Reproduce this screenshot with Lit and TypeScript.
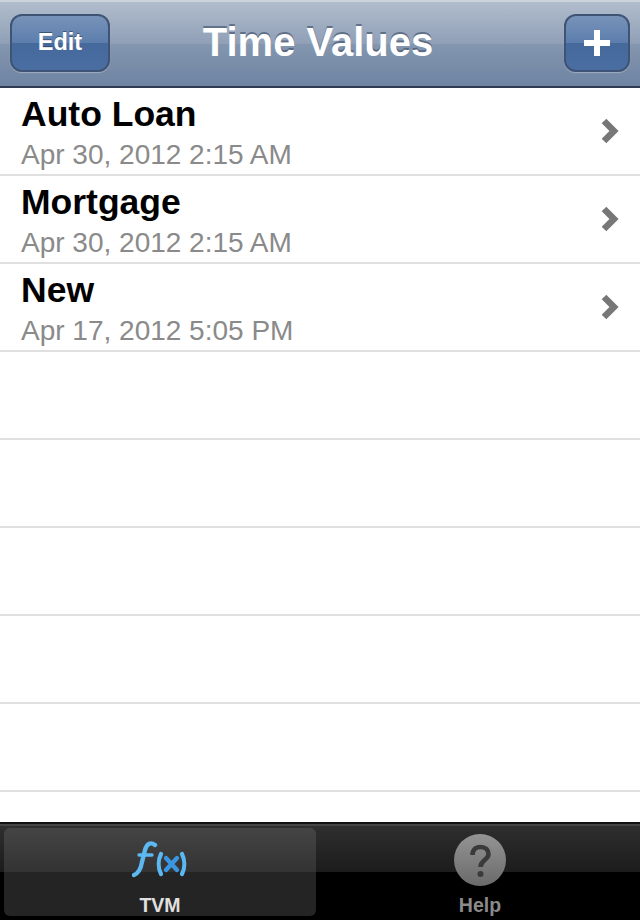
import { LitElement, css, html, svg } from "lit";
import { customElement } from "lit/decorators.js";

const ROWS = [
  { title: "Auto Loan", date: "Apr 30, 2012 2:15 AM" },
  { title: "Mortgage", date: "Apr 30, 2012 2:15 AM" },
  { title: "New", date: "Apr 17, 2012 5:05 PM" },
  null,
  null,
  null,
  null,
  null,
];

const chevron = svg`<path d="M4 4 L14 14 L4 24" fill="none" stroke="#777" stroke-width="6.5" stroke-linecap="butt" stroke-linejoin="miter" />`;

@customElement("app-root")
export class AppRoot extends LitElement {
  static styles = css`
    :host {
      display: flex;
      flex-direction: column;
      width: 640px;
      height: 920px;
      overflow: hidden;
      background: #fff;
      font-family: "Liberation Sans", Arial, sans-serif;
    }

    .nav {
      flex: none;
      box-sizing: border-box;
      height: 88px;
      display: grid;
      grid-template-columns: 1fr auto 1fr;
      align-items: center;
      padding: 0 10px 2px;
      border-top: 2px solid #ccd3dd;
      border-bottom: 2px solid #2d3a50;
      background: linear-gradient(#b1bdcd 0%, #8f9fb6 50%, #8496af 50%, #6e84a3 100%);
    }

    .nav-title {
      color: #fff;
      font-size: 40px;
      font-weight: bold;
      margin-bottom: 2px;
      transform: translateX(-2px);
      text-shadow: 0 -2px 0 rgba(60, 75, 100, 0.6);
    }

    .btn {
      box-sizing: border-box;
      height: 58px;
      margin-top: -1px;
      display: flex;
      align-items: center;
      justify-content: center;
      border: 2px solid #3f5474;
      border-radius: 12px;
      color: #fff;
      font-size: 23.5px;
      font-weight: bold;
      text-shadow: 0 -1px 0 rgba(30, 50, 80, 0.6);
      background: linear-gradient(#7792b8 0%, #5c7ead 50%, #46699c 50%, #4a6ea2 100%);
      box-shadow: 0 1px 1px rgba(255, 255, 255, 0.3);
    }

    .btn.edit {
      width: 100px;
      justify-self: start;
    }

    .btn.add {
      width: 66px;
      justify-self: end;
    }

    .list {
      flex: 1;
      min-height: 0;
      overflow: hidden;
    }

    .row {
      box-sizing: border-box;
      height: 88px;
      padding: 6px 20px 0 21px;
      border-bottom: 2px solid #e0e0e0;
      display: flex;
      align-items: center;
      justify-content: space-between;
    }

    .text {
      align-self: flex-start;
    }

    .title {
      color: #000;
      font-size: 35.5px;
      line-height: 40px;
      font-weight: bold;
    }

    .date {
      color: #8a8a8a;
      font-size: 28px;
      line-height: 34px;
      margin-top: 4px;
    }

    .chevron {
      width: 20px;
      height: 28px;
      margin-bottom: 6px;
    }

    .tabbar {
      flex: none;
      height: 98px;
      box-sizing: border-box;
      display: grid;
      grid-template-columns: 1fr 1fr;
      gap: 8px;
      padding: 4px 4px 4px;
      border-top: 2px solid #111;
      box-shadow: inset 0 2px 0 #444;
      background: linear-gradient(#2f2f2f 0%, #1c1c1c 50%, #000 50%, #000 100%);
    }

    .tab {
      display: flex;
      flex-direction: column;
      align-items: center;
      justify-content: flex-end;
      border-radius: 6px;
      color: #8a8a8a;
      font-size: 19.5px;
      font-weight: bold;
      line-height: 22px;
    }

    .tab.active {
      color: #e0e0e0;
      background: linear-gradient(#444 0%, #333 50%, #242424 50%, #242424 100%);
    }

    .tab svg {
      display: block;
      width: 56px;
      height: 56px;
      margin-bottom: 6px;
    }
  `;

  private renderRow(row: (typeof ROWS)[number]) {
    if (!row) return html`<div class="row"></div>`;
    return html`
      <div class="row">
        <div class="text">
          <div class="title">${row.title}</div>
          <div class="date">${row.date}</div>
        </div>
        <svg class="chevron" viewBox="0 0 20 28">${chevron}</svg>
      </div>
    `;
  }

  render() {
    return html`
      <div class="nav">
        <div class="btn edit">Edit</div>
        <div class="nav-title">Time Values</div>
        <div class="btn add">
          <svg width="28" height="28" viewBox="0 0 28 28">
            <path d="M11 1h6v10h10v6H17v10h-6V17H1v-6h10z" fill="#fff" />
          </svg>
        </div>
      </div>
      <div class="list">${ROWS.map((r) => this.renderRow(r))}</div>
      <div class="tabbar">
        <div class="tab active">
          <svg viewBox="0 0 56 56" fill="none" stroke="#5cb8f0" stroke-linecap="round">
            <path d="M23 13c-4-3-8-2-10 5l-3 12c-1 6-3 11-8 13" stroke-width="4.4" />
            <path d="M7 23h13" stroke-width="3.4" />
            <path d="M29 22c-3 6-3 14 0 20M50 22c3 6 3 14 0 20" stroke-width="4.2" />
            <path d="M34 26l11 12M45 26L34 38" stroke="#3a96e0" stroke-width="4.4" />
          </svg>
          TVM
        </div>
        <div class="tab">
          <svg viewBox="0 0 56 56">
            <defs>
              <linearGradient id="help" x1="0" y1="0" x2="0" y2="1">
                <stop offset="0" stop-color="#949494" />
                <stop offset="1" stop-color="#6a6a6a" />
              </linearGradient>
            </defs>
            <circle cx="28" cy="28" r="26" fill="url(#help)" />
            <path d="M20.5 23c0-5 3-8 8-8s8 3 8 7c0 6-8 6-8 13" fill="none" stroke="#3a3a3a" stroke-width="4.6" />
            <circle cx="28.5" cy="42" r="3" fill="#3a3a3a" />
          </svg>
          Help
        </div>
      </div>
    `;
  }
}
